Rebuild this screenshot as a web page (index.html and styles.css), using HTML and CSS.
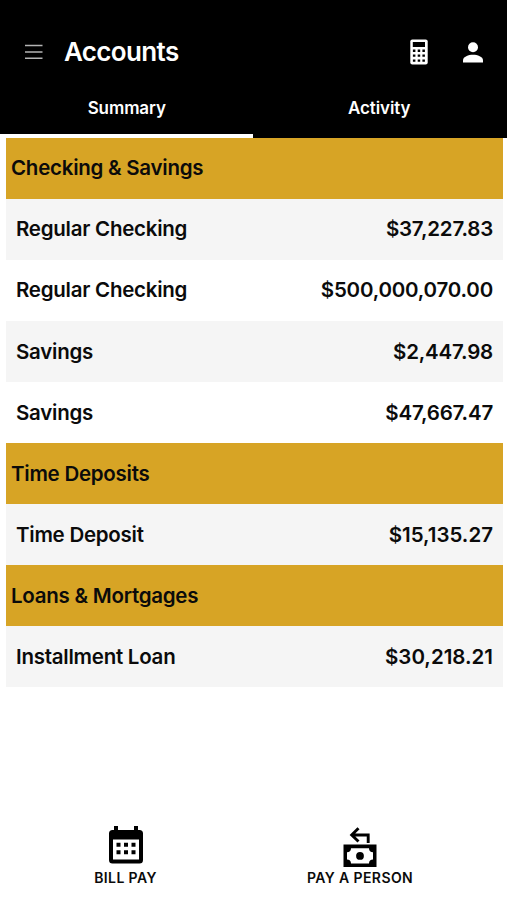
FILE: index.html
```html
<!DOCTYPE html>
<html lang="en">
<head>
<meta charset="utf-8">
<title>Accounts</title>
<link rel="stylesheet" href="styles.css">
</head>
<body>
<header class="header">
  <div class="bar">
    <svg class="menu" width="18" height="16" viewBox="0 0 18 16"><path d="M0 1.500h17.500M0 8h17.500M0 14.200h17.500" stroke="#b4b4b4" stroke-width="1.600"/></svg>
    <h1 class="title">Accounts</h1>
    <svg class="calculator" width="18" height="26" viewBox="0 0 18 26">
      <rect x=".3" y=".5" width="17.400" height="25" rx="2" fill="#fff"/>
      <path fill="#000" d="M2.800 3h12.200v5h-12.200zM2.900 10.600h2.500v2.300h-2.500zM7.700 10.600h2.500v2.300h-2.500zM12.400 10.600h2.500v2.300h-2.500zM2.900 15.500h2.500v2.300h-2.500zM7.700 15.500h2.500v2.300h-2.500zM12.400 15.500h2.500v2.300h-2.500zM2.900 20.400h2.500v2.300h-2.500zM7.700 20.400h2.500v2.300h-2.500zM12.400 20.400h2.500v2.300h-2.500z"/>
    </svg>
    <svg class="person" width="20" height="21" viewBox="0 0 20 21" fill="#fff"><circle cx="10" cy="5.300" r="5"/><path d="M0 20.600v-2.300c0-3.600 5.500-5.500 10-5.500s10 1.900 10 5.500v2.300z"/></svg>
  </div>
  <nav class="tabs">
    <a class="tab tab-active">Summary</a>
    <a class="tab">Activity</a>
  </nav>
</header>
<main class="list">
  <h2 class="group"><span>Checking &amp; Savings</span></h2>
  <div class="row shaded"><span>Regular Checking</span><span class="amount">$37,227.83</span></div>
  <div class="row"><span>Regular Checking</span><span class="amount">$500,000,070.00</span></div>
  <div class="row shaded"><span>Savings</span><span class="amount">$2,447.98</span></div>
  <div class="row"><span>Savings</span><span class="amount">$47,667.47</span></div>
  <h2 class="group"><span>Time Deposits</span></h2>
  <div class="row shaded"><span>Time Deposit</span><span class="amount amount-wide">$15,135.27</span></div>
  <h2 class="group"><span>Loans &amp; Mortgages</span></h2>
  <div class="row shaded"><span>Installment Loan</span><span class="amount amount-wide">$30,218.21</span></div>
</main>
<footer class="footer">
  <a class="action bill">
    <svg width="36" height="42" viewBox="0 0 36 42">
      <path d="M6 1h4v4h16v-4h4v4h1.500a3.500 3.500 0 0 1 3.500 3.500v26.500a3.500 3.500 0 0 1-3.500 3.500h-27a3.500 3.500 0 0 1-3.500-3.500v-26.500a3.500 3.500 0 0 1 3.500-3.500h1.500z" fill="#000"/>
      <path d="M5 14.500h26v20h-26z" fill="#fff"/>
      <path fill="#000" d="M8.500 17.700h4v4h-4zM16 17.700h4v4h-4zM23.500 17.700h4v4h-4zM8.500 25.200h4v4h-4zM16 25.200h4v4h-4zM23.500 25.200h4v4h-4z"/>
    </svg>
    <span>BILL PAY</span>
  </a>
  <a class="action pay">
    <svg width="36" height="42" viewBox="0 0 36 42">
      <path d="M26.200 18v-8h-15.500M16.500 3.200l-6.800 6.800 6.800 6.500" fill="none" stroke="#000" stroke-width="2.900"/>
      <path d="M1.500 19.500h33v22.500h-33z" fill="#000"/>
      <path d="M9 23.300h18c0 2.500 1.500 4 4 4v7.200c-2.500 0-4 1.500-4 4h-18c0-2.500-1.500-4-4-4v-7.200c2.500 0 4-1.500 4-4z" fill="#fff"/>
      <circle cx="18" cy="30.900" r="3.900" fill="#000"/>
    </svg>
    <span>PAY A PERSON</span>
  </a>
</footer>
</body>
</html>
```
FILE: styles.css
```css
* { box-sizing: border-box; }
body {
  margin: 0;
  height: 900px;
  display: flex;
  flex-direction: column;
  background: #fff;
  color: #0b0b0b;
  font-family: Inter, "Liberation Sans", sans-serif;
  font-weight: 600;
  overflow: hidden;
}
svg { display: block; flex: none; }
.header { height: 138px; flex: none; background: #000; color: #fff; }
.bar { height: 80px; padding: 24px 24px 0 25px; display: flex; align-items: center; }
.title { margin: 0 auto 0 21px; font-size: 26px; line-height: 32px; font-weight: 600; letter-spacing: -.65px; }
.calculator { margin-right: 35px; }
.tabs { display: flex; height: 58px; }
.tab {
  width: 252.500px;
  padding: 18px 0 0 1px;
  text-align: center;
  font-size: 17px;
  line-height: 21px;
  letter-spacing: -.1px;
}
.tab-active { border-bottom: 4px solid #fff; }
.list { margin: -.5px 4px 0 6px; font-size: 20.500px; }
.group, .row { height: 61.080px; padding-bottom: .5px; display: flex; align-items: center; }
.group { margin: 0; padding-left: 5px; background: #d7a425; font-size: inherit; font-weight: 600; letter-spacing: -.25px; }
.row { padding-left: 10px; padding-right: 10px; justify-content: space-between; letter-spacing: -.25px; }
.shaded { background: #f5f5f5; }
.amount { letter-spacing: -.2px; }
.amount-wide { letter-spacing: 0; }
.footer { margin-top: auto; height: 75px; display: flex; font-size: 14px; line-height: 18px; letter-spacing: .4px; }
.action { display: flex; flex-direction: column; align-items: center; gap: 2px; width: 251px; font-weight: 600; }
.pay { width: 218px; }
```
